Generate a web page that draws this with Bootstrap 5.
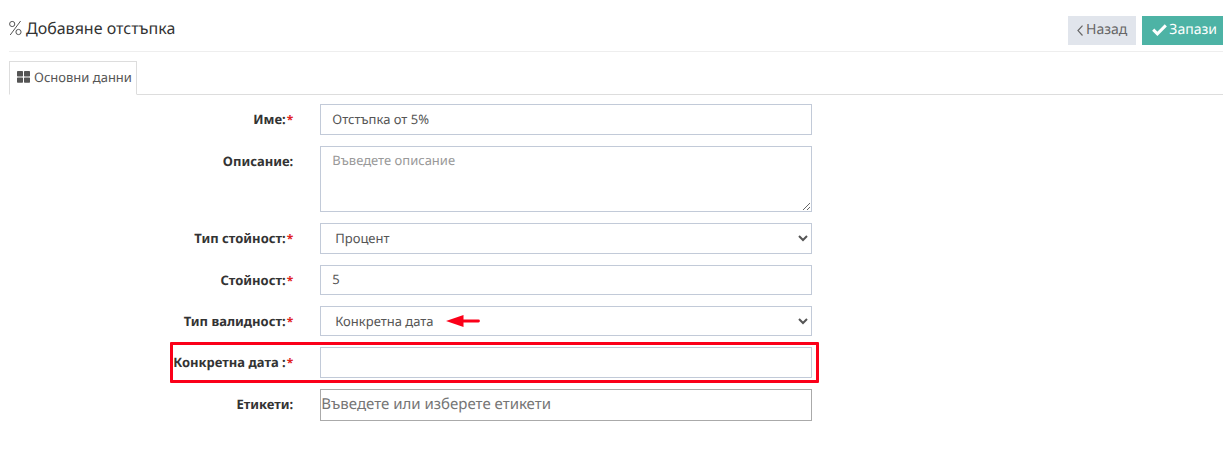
<!DOCTYPE html>
<html lang="bg">
<head>
<meta charset="utf-8">
<meta name="viewport" content="width=device-width, initial-scale=1">
<title>Добавяне отстъпка</title>
<link href="https://cdn.jsdelivr.net/npm/bootstrap@5.3.0/dist/css/bootstrap.min.css" rel="stylesheet">
<style>
  body { font-family: "Noto Sans", "Open Sans", sans-serif; font-size: 13px; line-height: 18px; color: #555; overflow-x: hidden; text-rendering: geometricPrecision; }
  input, select, textarea, button { text-rendering: inherit; }
  .page { padding: 10px 0 32px 9px; }
  .page-head { height: 42px; border-bottom: 1px solid #eee; }
  .page-head h1 { font-size: 16px; line-height: 22px; font-weight: 400; color: #333; padding-top: 7px; gap: 4px; }
  .head-actions { gap: 6px; padding-top: 6px; }
  .head-actions .btn { --bs-btn-font-size: 14px; --bs-btn-line-height: 20px; --bs-btn-border-radius: 0; --bs-btn-border-width: 0; height: 29px; }
  .btn-back { --bs-btn-bg: #e1e5ec; --bs-btn-color: #666; --bs-btn-hover-bg: #d3d9e3; padding: 0 9px 1px; gap: 3px; }
  .btn-save { --bs-btn-bg: #4db3a5; --bs-btn-color: #fff; --bs-btn-hover-bg: #3f9a8d; --bs-btn-hover-color: #fff; padding: 0 6px 1px 10px; gap: 2px; }
  .nav-tabs { --bs-nav-tabs-border-color: #ddd; --bs-nav-tabs-border-radius: 0; margin-top: 9px; }
  .nav-tabs .nav-link.active { padding: 6px 4px 8px 7px; color: #555; gap: 4px; border-color: #ddd #ddd #fff; }
  .discount-form { padding-top: 9px; gap: 11px; }
  .field-row { margin: 0 -17px 0 -14px; }
  .field-row > .field-label { padding: 6px 13px 0 0; font-weight: 700; color: #333; text-align: right; white-space: nowrap; }
  .field-row > .field-cell { padding: 0 13px 0 14px; }
  .required { color: #e02222; font-size: 12px; margin-left: 1px; }
  .field { display: block; width: 100%; height: 31px; padding: 0 11px 2px; border: 1px solid #c2cad8; border-radius: 0; background: #fff; color: #555; font-size: 13px; line-height: 18px; }
  .field::placeholder { color: #999; opacity: 1; }
  select.field { padding: 0 0 1px 10px; }
  .field-slim { height: 30px; }
  textarea.field { height: 66px; padding-top: 4px; resize: vertical; }
  .field-tags { height: 32px; padding: 0 0 2px; border-color: #aaa; font-size: 15px; }
  .field-tags::placeholder { color: #757575; }
  .marker-frame { left: 175px; top: -5px; bottom: -5px; width: 649px; border: 3px solid #fb0019; border-radius: 1px; pointer-events: none; }
  .marker-arrow { left: 140px; top: 8px; pointer-events: none; }
</style>
</head>
<body>
<main class="page">
  <header class="page-head d-flex justify-content-between align-items-start">
    <h1 class="d-flex align-items-center mb-0">
      <svg width="13" height="16" viewBox="0 0 13 16" fill="none" stroke="#555" stroke-width="1" aria-hidden="true"><circle cx="3.2" cy="4" r="2.6"/><circle cx="9.5" cy="12" r="2.6"/><path d="M11.6 1 1.2 15"/></svg>
      Добавяне отстъпка
    </h1>
    <div class="head-actions d-flex">
      <button type="button" class="btn btn-back d-flex align-items-center">
        <svg width="6" height="12" viewBox="0 0 6 12" fill="none" stroke="currentColor" stroke-width="1.2" aria-hidden="true"><path d="M5.5 1.7 1 6.6l4.5 4.9"/></svg>
        Назад
      </button>
      <button type="submit" form="discount" class="btn btn-save d-flex align-items-center">
        <svg width="15" height="12" viewBox="0 0 15 12" fill="none" stroke="currentColor" stroke-width="3" aria-hidden="true"><path d="m1.2 5.6 4.2 4.2 8.4-8.4"/></svg>
        Запази
      </button>
    </div>
  </header>

  <ul class="nav nav-tabs">
    <li class="nav-item">
      <a class="nav-link active d-flex align-items-center" href="#discount" aria-current="page">
        <svg width="13" height="12" viewBox="0 0 13 12" fill="#555" aria-hidden="true"><rect width="6" height="5.4" rx=".7"/><rect x="7" width="6" height="5.4" rx=".7"/><rect y="6.4" width="6" height="5.4" rx=".7"/><rect x="7" y="6.4" width="6" height="5.4" rx=".7"/></svg>
        Основни данни
      </a>
    </li>
  </ul>

  <form id="discount" class="discount-form d-flex flex-column">
    <div class="row field-row">
      <label class="col-3 field-label" for="name">Име:<span class="required">*</span></label>
      <div class="col-5 field-cell"><input class="field" type="text" id="name" value="Отстъпка от 5%"></div>
    </div>
    <div class="row field-row">
      <label class="col-3 field-label" for="description">Описание:</label>
      <div class="col-5 field-cell"><textarea class="field" id="description" placeholder="Въведете описание"></textarea></div>
    </div>
    <div class="row field-row">
      <label class="col-3 field-label" for="value-type">Тип стойност:<span class="required">*</span></label>
      <div class="col-5 field-cell"><select class="field" id="value-type"><option>Процент</option></select></div>
    </div>
    <div class="row field-row">
      <label class="col-3 field-label" for="value">Стойност:<span class="required">*</span></label>
      <div class="col-5 field-cell"><input class="field field-slim" type="text" id="value" value="5"></div>
    </div>
    <div class="row field-row">
      <label class="col-3 field-label" for="validity">Тип валидност:<span class="required">*</span></label>
      <div class="col-5 field-cell position-relative">
        <select class="field field-slim" id="validity"><option>Конкретна дата</option></select>
        <svg class="marker-arrow position-absolute" width="36" height="14" viewBox="0 0 36 14" aria-hidden="true"><path d="M0 7 17.5 1v12z" fill="#fb0019"/><path d="M16 7h16.5" stroke="#fb0019" stroke-width="2.8" stroke-linecap="round"/></svg>
      </div>
    </div>
    <div class="row field-row position-relative">
      <label class="col-3 field-label" for="date">Конкретна дата :<span class="required">*</span></label>
      <div class="col-5 field-cell"><input class="field" type="text" id="date"></div>
      <div class="marker-frame position-absolute"></div>
    </div>
    <div class="row field-row">
      <label class="col-3 field-label" for="tags">Етикети:</label>
      <div class="col-5 field-cell"><input class="field field-tags" type="text" id="tags" placeholder="Въведете или изберете етикети"></div>
    </div>
  </form>
</main>
<script src="https://cdn.jsdelivr.net/npm/bootstrap@5.3.0/dist/js/bootstrap.bundle.min.js"></script>
</body>
</html>
